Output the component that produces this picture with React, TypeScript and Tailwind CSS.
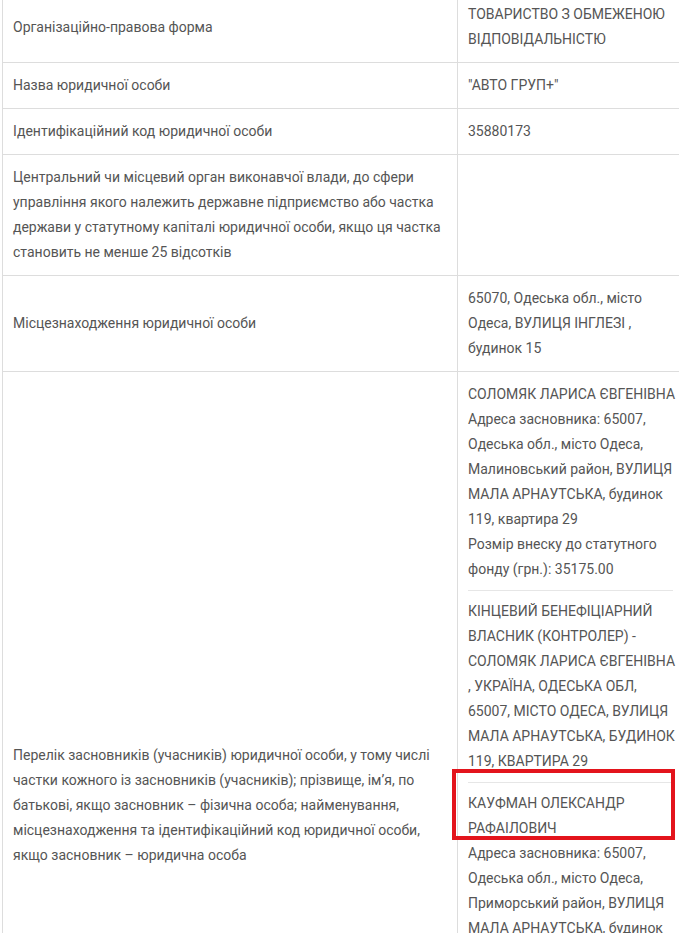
const rows: Array<{ label: string[]; value: string[] }> = [
  {
    label: ['Організаційно-правова форма'],
    value: ['ТОВАРИСТВО З ОБМЕЖЕНОЮ', 'ВІДПОВІДАЛЬНІСТЮ'],
  },
  { label: ['Назва юридичної особи'], value: ['"АВТО ГРУП+"'] },
  { label: ['Ідентифікаційний код юридичної особи'], value: ['35880173'] },
  {
    label: [
      'Центральний чи місцевий орган виконавчої влади, до сфери',
      'управління якого належить державне підприємство або частка',
      'держави у статутному капіталі юридичної особи, якщо ця частка',
      'становить не менше 25 відсотків',
    ],
    value: [],
  },
  {
    label: ['Місцезнаходження юридичної особи'],
    value: ['65070, Одеська обл., місто', 'Одеса, ВУЛИЦЯ ІНГЛЕЗІ ,', 'будинок 15'],
  },
];

const founders: Array<{ name: string[]; lines: string[]; marked?: boolean }> = [
  {
    name: ['СОЛОМЯК ЛАРИСА ЄВГЕНІВНА'],
    lines: [
      'Адреса засновника: 65007,',
      'Одеська обл., місто Одеса,',
      'Малиновський район, ВУЛИЦЯ',
      'МАЛА АРНАУТСЬКА, будинок',
      '119, квартира 29',
      'Розмір внеску до статутного',
      'фонду (грн.): 35175.00',
    ],
  },
  {
    name: [],
    lines: [
      'КІНЦЕВИЙ БЕНЕФІЦІАРНИЙ',
      'ВЛАСНИК (КОНТРОЛЕР) -',
      'СОЛОМЯК ЛАРИСА ЄВГЕНІВНА',
      ', УКРАЇНА, ОДЕСЬКА ОБЛ,',
      '65007, МІСТО ОДЕСА, ВУЛИЦЯ',
      'МАЛА АРНАУТСЬКА, БУДИНОК',
      '119, КВАРТИРА 29',
    ],
  },
  {
    name: ['КАУФМАН ОЛЕКСАНДР', 'РАФАІЛОВИЧ'],
    marked: true,
    lines: [
      'Адреса засновника: 65007,',
      'Одеська обл., місто Одеса,',
      'Приморський район, ВУЛИЦЯ',
      'МАЛА АРНАУТСЬКА, будинок',
      '119, квартира 29',
      'Розмір внеску до статутного',
      'фонду (грн.): 35175.00',
    ],
  },
  {
    name: [],
    lines: [
      'КІНЦЕВИЙ БЕНЕФІЦІАРНИЙ',
      'ВЛАСНИК (КОНТРОЛЕР) -',
      'КАУФМАН ОЛЕКСАНДР',
      'РАФАІЛОВИЧ , УКРАЇНА,',
      'ОДЕСЬКА ОБЛ, 65007, МІСТО',
      'ОДЕСА, ВУЛИЦЯ МАЛА',
      'АРНАУТСЬКА, БУДИНОК 119,',
      'КВАРТИРА 29',
    ],
  },
];

const Lines = ({ lines }: { lines: string[] }) => (
  <>
    {lines.map((line, i) => (
      <span key={i} className="block whitespace-nowrap">
        {line}
      </span>
    ))}
  </>
);

export default function App() {
  return (
    <div className="w-full h-[933px] overflow-hidden bg-white pl-[2px]">
      <table
        className="-mt-[9px] w-[681px] table-fixed border-collapse text-[14px] leading-[25px] text-[#555555]"
        style={{ fontFamily: 'Roboto, "Open Sans", sans-serif' }}
      >
        <colgroup>
          <col className="w-[455px]" />
          <col className="w-[226px]" />
        </colgroup>
        <tbody>
          {rows.map((row, i) => (
            <tr key={i}>
              <td className="border border-[#dddddd] px-[10px] py-[10px] align-middle">
                <Lines lines={row.label} />
              </td>
              <td className="border border-[#dddddd] px-[10px] py-[10px] align-middle">
                <Lines lines={row.value} />
              </td>
            </tr>
          ))}
          <tr>
            <td className="border border-[#dddddd] px-[10px] pt-[10px] pb-[14px] align-middle">
              <Lines
                lines={[
                  'Перелік засновників (учасників) юридичної особи, у тому числі',
                  'частки кожного із засновників (учасників); прізвище, ім’я, по',
                  'батькові, якщо засновник – фізична особа; найменування,',
                  'місцезнаходження та ідентифікаційний код юридичної особи,',
                  'якщо засновник – юридична особа',
                ]}
              />
            </td>
            <td className="border border-[#dddddd] px-[10px] py-[10px] align-middle">
              {founders.map((f, i) => (
                <div
                  key={i}
                  className={
                    i < founders.length - 1
                      ? 'border-b border-[#e6e6e6] pb-[8px] mb-[8px]'
                      : ''
                  }
                >
                  {f.name.length > 0 && (
                    <div className="relative">
                      <Lines lines={f.name} />
                      {f.marked && (
                        <div className="absolute -left-[16px] -right-[2px] -top-[22px] bottom-[1px] border-[4px] border-[#e3141c]" />
                      )}
                    </div>
                  )}
                  <Lines lines={f.lines} />
                </div>
              ))}
            </td>
          </tr>
        </tbody>
      </table>
    </div>
  );
}
